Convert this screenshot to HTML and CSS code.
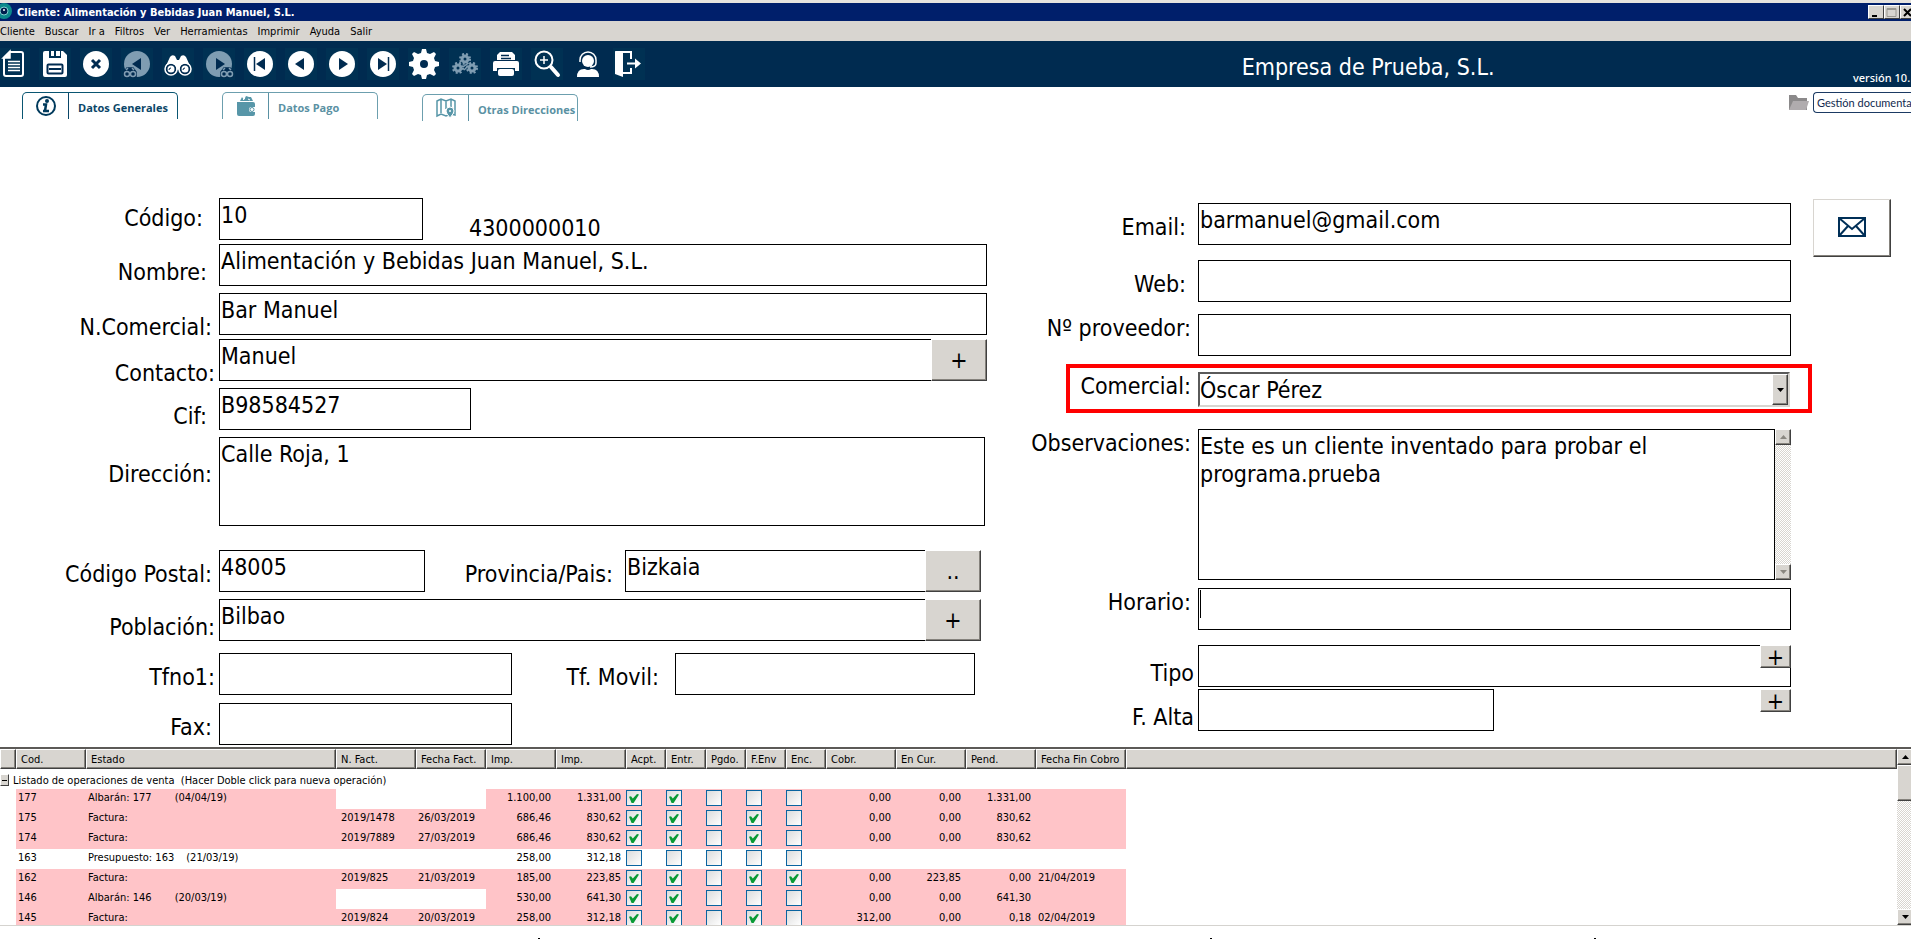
FILE: index.html
```html
<!DOCTYPE html>
<html lang="es">
<head>
<meta charset="utf-8">
<title>Cliente: Alimentación y Bebidas Juan Manuel, S.L.</title>
<link rel="stylesheet" href="styles.css">
</head>
<body>
<div class="window">
  <header class="titlebar">
    <svg class="titlebar-icon" width="13" height="18" viewBox="0 0 13 18"><circle cx="4" cy="8" r="8" fill="#0b8a8c"/><circle cx="4" cy="8" r="4" fill="#00204f" stroke="#7fd0d0"/><circle cx="4" cy="7" r="1" fill="#fff"/></svg>
    <h1 class="titlebar-text">Cliente: Alimentación y Bebidas Juan Manuel, S.L.</h1>
    <div class="win-buttons">
      <button class="win-button" aria-label="Minimizar"><svg width="12" height="11"><path d="M2 9h5" stroke="#000" stroke-width="2"/></svg></button>
      <button class="win-button" aria-label="Maximizar"><svg width="12" height="11"><path d="M1 1.500h9v8h-9zM1 2.500h9" fill="none" stroke="#9a9892"/></svg></button>
      <button class="win-button" aria-label="Cerrar"><svg width="12" height="11"><path d="M2 2l7 7M9 2l-7 7" stroke="#000" stroke-width="2"/></svg></button>
    </div>
  </header>

  <nav class="menubar">
    <button>Cliente</button><button>Buscar</button><button>Ir a</button><button>Filtros</button><button>Ver</button><button>Herramientas</button><button>Imprimir</button><button>Ayuda</button><button>Salir</button>
  </nav>

  <div class="toolbar">
    <div class="tools">
      <button class="tool" aria-label="Nuevo"><svg viewBox="0 0 32 32"><path d="M12 4h11q2 0 2 2v20q0 2-2 2H8q-2 0-2-2V10z" fill="none" stroke="#fff" stroke-width="2"/><path d="M5 10l7-7v7zM10 13.500h12M10 16.500h12M10 19.500h12M10 22.500h12" fill="#fff" stroke="#fff" stroke-width="1.500"/></svg></button>
      <button class="tool" aria-label="Guardar"><svg viewBox="0 0 32 32"><path d="M6 3h4v7h12V3h2l4 4v20q0 2-2 2H6q-2 0-2-2V5q0-2 2-2z" fill="#fff"/><rect x="8.500" y="16.500" width="15" height="9" rx="1" fill="none" stroke="#002b50" stroke-width="2"/><path d="M10 21h12" stroke="#002b50" stroke-width="2"/><path d="M12 3h3v5h-3zM17 3h4v5h-4z" fill="#fff"/></svg></button>
      <button class="tool" aria-label="Cancelar"><svg viewBox="0 0 32 32"><circle cx="16" cy="16" r="13" fill="#fff"/><path d="M12 12l8 8M20 12l-8 8" stroke="#002b50" stroke-width="3"/></svg></button>
      <button class="tool" aria-label="Búsqueda anterior" disabled><svg viewBox="0 0 32 32"><circle cx="16" cy="16" r="13" fill="#7f9db2"/><path d="M20 10v12l-9-6z" fill="#002b50"/><g fill="#002b50" stroke="#7f9db2" stroke-width="1.500"><path d="M3 29v-5l3-4h6l3 4v5z" stroke="#002b50"/><circle cx="6" cy="26" r="2.500"/><circle cx="12" cy="26" r="2.500"/><path d="M5 22l2-2M13 22l-2-2"/></g></svg></button>
      <button class="tool" aria-label="Buscar"><svg viewBox="0 0 32 32"><path d="M3 20l5-11q2-3 5-1l2 4h2l2-4q3-2 5 1l5 11-3 6h-7l-3-5-3 5H6z" fill="#fff"/><g fill="#fff" stroke="#002b50" stroke-width="2"><circle cx="9" cy="21" r="4.500"/><circle cx="23" cy="21" r="4.500"/></g><g fill="none" stroke="#fff" stroke-width="1.500"><circle cx="9" cy="21" r="6"/><circle cx="23" cy="21" r="6"/></g><path d="M7 22a2 2 0 0 1 2-2M21 22a2 2 0 0 1 2-2" fill="none" stroke="#002b50"/></svg></button>
      <button class="tool" aria-label="Búsqueda siguiente" disabled><svg viewBox="0 0 32 32"><circle cx="16" cy="16" r="13" fill="#7f9db2"/><path d="M13 10v12l9-6z" fill="#002b50"/><g fill="#002b50" stroke="#7f9db2" stroke-width="1.500"><path d="M18 29v-5l3-4h6l3 4v5z" stroke="#002b50"/><circle cx="21" cy="26" r="2.500"/><circle cx="27" cy="26" r="2.500"/><path d="M20 22l2-2M28 22l-2-2"/></g></svg></button>
      <button class="tool" aria-label="Primero"><svg viewBox="0 0 32 32"><circle cx="16" cy="16" r="13" fill="#fff"/><path d="M21 10v12l-9-6z" fill="#002b50"/><path d="M10.500 9v14" stroke="#002b50" stroke-width="1.500"/></svg></button>
      <button class="tool" aria-label="Anterior"><svg viewBox="0 0 32 32"><circle cx="16" cy="16" r="13" fill="#fff"/><path d="M19 10v12l-9-6z" fill="#002b50"/></svg></button>
      <button class="tool" aria-label="Siguiente"><svg viewBox="0 0 32 32"><circle cx="16" cy="16" r="13" fill="#fff"/><path d="M13 10v12l9-6z" fill="#002b50"/></svg></button>
      <button class="tool" aria-label="Último"><svg viewBox="0 0 32 32"><circle cx="16" cy="16" r="13" fill="#fff"/><path d="M11 10v12l9-6z" fill="#002b50"/><path d="M21.500 9v14" stroke="#002b50" stroke-width="1.500"/></svg></button>
      <button class="tool" aria-label="Configuración"><svg viewBox="0 0 32 32"><path d="M13 5l1-4h4l1 4 3 1 4-2 2 2-2 4 1 3 4 1v4l-4 1-1 3 2 4-2 2-4-2-3 1-1 4h-4l-1-4-3-1-4 2-2-2 2-4-1-3-4-1v-4l4-1 1-3-2-4 2-2 4 2z" fill="#fff"/><circle cx="16" cy="16" r="4" fill="#002b50"/></svg></button>
      <button class="tool" aria-label="Procesos" disabled><svg viewBox="0 0 32 32"><g fill="none" stroke="#7f9db2"><circle cx="16" cy="11" r="3" stroke-width="3"/><circle cx="16" cy="11" r="5" stroke-width="2" stroke-dasharray="2 2"/><circle cx="9" cy="20" r="3" stroke-width="3"/><circle cx="9" cy="20" r="5" stroke-width="2" stroke-dasharray="2 2"/><circle cx="23" cy="20" r="3" stroke-width="3"/><circle cx="23" cy="20" r="5" stroke-width="2" stroke-dasharray="2 2"/><path d="M14 19l4-3M15 22l3-3" stroke-width="1.500"/></g></svg></button>
      <button class="tool" aria-label="Imprimir"><svg viewBox="0 0 32 32"><path d="M10 4h12l3 3v6H7V7z" fill="#fff"/><path d="M11 7.500h8M11 10.500h10" stroke="#002b50" stroke-width="1.500"/><path d="M5 13h22q2 0 2 2v8h-4v-3H7v3H3v-8q0-2 2-2z" fill="#fff"/><path d="M6 12.500h20" stroke="#002b50"/><rect x="8" y="21" width="16" height="7" rx="2" fill="#fff"/></svg></button>
      <button class="tool" aria-label="Zoom"><svg viewBox="0 0 32 32"><circle cx="13" cy="12" r="8.500" fill="none" stroke="#fff" stroke-width="2"/><path d="M13 8v8M9 12h8" stroke="#fff" stroke-width="1.500"/><path d="M20 19l7 8" stroke="#fff" stroke-width="4" stroke-linecap="round"/></svg></button>
      <button class="tool tool--plain" aria-label="Soporte"><svg viewBox="0 0 32 32"><circle cx="16" cy="13" r="6" fill="#fff"/><path d="M8 14v-2a8 8 0 0 1 16 0v3q0 4-6 4" fill="none" stroke="#fff" stroke-width="1.500"/><path d="M5 29q0-8 7-8h1q3 2 6 0h1q7 0 7 8z" fill="#fff"/></svg></button>
      <button class="tool" aria-label="Salir"><svg viewBox="0 0 32 32"><path d="M2 3l8 2v24l-8-3z" fill="#fff"/><path d="M3 4h15v7M18 20v5h-8" fill="none" stroke="#fff" stroke-width="2"/><path d="M14 14.500h8v-4l6 5-6 5v-4h-8z" fill="#fff"/></svg></button>
    </div>
    <div class="company">Empresa de Prueba, S.L.</div>
    <div class="version">versión 10.</div>
  </div>

  <div class="tabs">
    <button class="tab tab--active"><span class="tab-icon"><svg width="22" height="22" viewBox="0 0 22 22"><circle cx="11" cy="11" r="9" fill="none" stroke="#003a5c" stroke-width="2"/><circle cx="12" cy="6" r="2" fill="#003a5c"/><path d="M8 9.500h3l-1 6.500M8 16h6" fill="none" stroke="#003a5c" stroke-width="2.500"/></svg></span><span class="tab-text">Datos Generales</span></button>
    <button class="tab"><span class="tab-icon"><svg width="22" height="22" viewBox="0 0 22 22"><path d="M2 7h16q2 0 2 2v3h-4q-2 0-2 2.500t2 2.500h4v2q0 2-2 2H4q-2 0-2-2z" fill="#5796a8"/><path d="M5 6l2-4 2 3 2-4 3 1 2 0 2 4z" fill="#5796a8"/><path d="M8 5l2-2M13 4l2 1" stroke="#fff"/><circle cx="17" cy="14.500" r="2" fill="none" stroke="#5796a8"/></svg></span><span class="tab-text">Datos Pago</span></button>
    <button class="tab tab--low"><span class="tab-icon"><svg width="22" height="22" viewBox="0 0 22 22"><path d="M2 4l4-2 5 2 5-2 4 2v14l-4-1-5 2-5-2-4 2zM6 2v14M11 4v8M16 2v8" fill="none" stroke="#5796a8" stroke-width="1.500"/><path d="M15 21q-4-5-4-7a4 4 0 0 1 8 0q0 2-4 7z" fill="#5796a8" stroke="#fff"/><circle cx="15" cy="14" r="1" fill="#fff"/></svg></span><span class="tab-text">Otras Direcciones</span></button>
    <div class="docs">
      <svg width="20" height="16" viewBox="0 0 20 16"><path d="M0 0h7l2 3h9v12H0z" fill="#8b898a"/><path d="M4 6h16l-3 9H0z" fill="#b0acae"/></svg>
      <button class="docs-button">Gestión documenta</button>
    </div>
  </div>

  <main class="form">
    <section class="panel panel--left">
      <div class="row">
        <label class="label label--high" for="codigo">Código:</label>
        <input class="field w-code" id="codigo" value="10">
        <output class="account">4300000010</output>
      </div>
      <div class="row gap-4"><label class="label label--in" for="nombre">Nombre:</label><input class="field" id="nombre" value="Alimentación y Bebidas Juan Manuel, S.L."></div>
      <div class="row gap-7"><label class="label label--low" for="ncom">N.Comercial:</label><input class="field" id="ncom" value="Bar Manuel"></div>
      <div class="row gap-4"><label class="label label--low label--near" for="contacto">Contacto:</label><input class="field field--joined" id="contacto" value="Manuel"><button class="add" aria-label="Añadir contacto">+</button></div>
      <div class="row gap-7"><label class="label label--in" for="cif">Cif:</label><input class="field w-cif" id="cif" value="B98584527"></div>
      <div class="row row--inset gap-7"><label class="label label--mid" for="dir">Dirección:</label><textarea class="field field--address" id="dir">Calle Roja, 1</textarea></div>
      <div class="row row--short gap-24">
        <label class="label label--up" for="cp">Código Postal:</label><input class="field w-cp" id="cp" value="48005">
        <label class="label label--second label--up" for="prov">Provincia/Pais:</label><input class="field field--joined" id="prov" value="Bizkaia"><button class="add" aria-label="Elegir provincia">..</button>
      </div>
      <div class="row row--short gap-7"><label class="label label--near" for="pob">Población:</label><input class="field field--joined" id="pob" value="Bilbao"><button class="add" aria-label="Añadir población">+</button></div>
      <div class="row row--phone gap-12">
        <label class="label label--near label--up" for="tf1">Tfno1:</label><input class="field w-phone" id="tf1">
        <label class="label label--mobile label--up" for="tfm">Tf. Movil:</label><input class="field" id="tfm">
      </div>
      <div class="row gap-8"><label class="label label--up" for="fax">Fax:</label><input class="field w-phone" id="fax"></div>
    </section>

    <section class="panel panel--right">
      <div class="row"><label class="label label--in label--up" for="email">Email:</label><input class="field" id="email" value="barmanuel@gmail.com"></div>
      <div class="row gap-15"><label class="label label--in label--up" for="web">Web:</label><input class="field" id="web"></div>
      <div class="row gap-12"><label class="label label--top" for="prv">Nº proveedor:</label><input class="field" id="prv"></div>
      <div class="row row--marked"><label class="label label--top" for="com">Comercial:</label>
        <div class="combo"><select id="com"><option>Óscar Pérez</option></select><span class="combo-arrow"><svg width="7" height="4"><path d="M0 0h7L3.500 4z"/></svg></span></div>
      </div>
      <div class="row gap-16"><label class="label label--top" for="obs">Observaciones:</label>
        <textarea class="field field--notes" id="obs">Este es un cliente inventado para probar el programa.prueba</textarea>
        <div class="scroll"><button class="scroll-button" aria-label="Subir"><svg width="7" height="4"><path d="M0 4h7L3.500 0z" fill="#8a8780"/></svg></button><button class="scroll-button" aria-label="Bajar"><svg width="7" height="4"><path d="M0 0h7L3.500 4z" fill="#8a8780"/></svg></button></div>
      </div>
      <div class="row gap-8"><label class="label label--top" for="hor">Horario:</label><input class="field field--caret" id="hor"></div>
      <div class="row gap-15"><label class="label label--near" for="tipo">Tipo</label><div class="field-wrap"><input class="field" id="tipo"><button class="add add--small add--over" aria-label="Añadir tipo">+</button></div></div>
      <div class="row gap-2"><label class="label label--near" for="alta">F. Alta</label><input class="field w-date" id="alta"><button class="add add--small add--end" aria-label="Añadir fecha">+</button></div>
    </section>

    <button class="mail" aria-label="Enviar email"><svg width="28" height="20" viewBox="0 0 28 20"><path d="M1 1h26v18H1zM1 1l13 11L27 1M1 19l9-10M27 19l-9-10" fill="none" stroke="#002f57" stroke-width="2"/></svg></button>
  </main>

  <section class="operations">
    <div class="table-wrap">
      <table class="grid">
        <colgroup><col class="c-tree"><col class="c-70"><col class="c-state"><col class="c-80"><col class="c-70"><col class="c-70"><col class="c-70"><col class="c-40"><col class="c-40"><col class="c-40"><col class="c-40"><col class="c-40"><col class="c-70"><col class="c-70"><col class="c-70"><col class="c-90"><col></colgroup>
        <thead><tr><th></th><th>Cod.</th><th>Estado</th><th>N. Fact.</th><th>Fecha Fact.</th><th>Imp.</th><th>Imp.</th><th>Acpt.</th><th>Entr.</th><th>Pgdo.</th><th>F.Env</th><th>Enc.</th><th>Cobr.</th><th>En Cur.</th><th>Pend.</th><th>Fecha Fin Cobro</th><th></th></tr></thead>
        <tbody>
        <tr class="group"><td colspan="17"><div class="group-line"><button class="collapse" aria-label="Contraer"><svg width="7" height="11"><path d="M1 5.500h5" stroke="#000"/></svg></button>Listado de operaciones de venta&nbsp; (Hacer Doble click para nueva operación)</div></td></tr>
        <tr class="due"><td></td><td>177</td><td>Albarán: 177<span class="when">(04/04/19)</span></td><td class="blank"></td><td class="blank"></td><td class="num">1.100,00</td><td class="num">1.331,00</td><td class="chk"><input type="checkbox" aria-label="Acpt." checked></td><td class="chk"><input type="checkbox" aria-label="Entr." checked></td><td class="chk"><input type="checkbox" aria-label="Pgdo."></td><td class="chk"><input type="checkbox" aria-label="F.Env"></td><td class="chk"><input type="checkbox" aria-label="Enc."></td><td class="num">0,00</td><td class="num">0,00</td><td class="num">1.331,00</td><td></td><td></td></tr>
        <tr class="due"><td></td><td>175</td><td>Factura:</td><td class="inv">2019/1478</td><td>26/03/2019</td><td class="num">686,46</td><td class="num">830,62</td><td class="chk"><input type="checkbox" aria-label="Acpt." checked></td><td class="chk"><input type="checkbox" aria-label="Entr." checked></td><td class="chk"><input type="checkbox" aria-label="Pgdo."></td><td class="chk"><input type="checkbox" aria-label="F.Env" checked></td><td class="chk"><input type="checkbox" aria-label="Enc."></td><td class="num">0,00</td><td class="num">0,00</td><td class="num">830,62</td><td></td><td></td></tr>
        <tr class="due"><td></td><td>174</td><td>Factura:</td><td class="inv">2019/7889</td><td>27/03/2019</td><td class="num">686,46</td><td class="num">830,62</td><td class="chk"><input type="checkbox" aria-label="Acpt." checked></td><td class="chk"><input type="checkbox" aria-label="Entr." checked></td><td class="chk"><input type="checkbox" aria-label="Pgdo."></td><td class="chk"><input type="checkbox" aria-label="F.Env" checked></td><td class="chk"><input type="checkbox" aria-label="Enc."></td><td class="num">0,00</td><td class="num">0,00</td><td class="num">830,62</td><td></td><td></td></tr>
        <tr><td></td><td>163</td><td>Presupuesto: 163<span class="when when--near">(21/03/19)</span></td><td></td><td></td><td class="num">258,00</td><td class="num">312,18</td><td class="chk"><input type="checkbox" aria-label="Acpt."></td><td class="chk"><input type="checkbox" aria-label="Entr."></td><td class="chk"><input type="checkbox" aria-label="Pgdo."></td><td class="chk"><input type="checkbox" aria-label="F.Env"></td><td class="chk"><input type="checkbox" aria-label="Enc."></td><td></td><td></td><td></td><td></td><td></td></tr>
        <tr class="due"><td></td><td>162</td><td>Factura:</td><td class="inv">2019/825</td><td>21/03/2019</td><td class="num">185,00</td><td class="num">223,85</td><td class="chk"><input type="checkbox" aria-label="Acpt." checked></td><td class="chk"><input type="checkbox" aria-label="Entr." checked></td><td class="chk"><input type="checkbox" aria-label="Pgdo."></td><td class="chk"><input type="checkbox" aria-label="F.Env" checked></td><td class="chk"><input type="checkbox" aria-label="Enc." checked></td><td class="num">0,00</td><td class="num">223,85</td><td class="num">0,00</td><td>21/04/2019</td><td></td></tr>
        <tr class="due"><td></td><td>146</td><td>Albarán: 146<span class="when">(20/03/19)</span></td><td class="blank"></td><td class="blank"></td><td class="num">530,00</td><td class="num">641,30</td><td class="chk"><input type="checkbox" aria-label="Acpt." checked></td><td class="chk"><input type="checkbox" aria-label="Entr." checked></td><td class="chk"><input type="checkbox" aria-label="Pgdo."></td><td class="chk"><input type="checkbox" aria-label="F.Env"></td><td class="chk"><input type="checkbox" aria-label="Enc."></td><td class="num">0,00</td><td class="num">0,00</td><td class="num">641,30</td><td></td><td></td></tr>
        <tr class="due"><td></td><td>145</td><td>Factura:</td><td class="inv">2019/824</td><td>20/03/2019</td><td class="num">258,00</td><td class="num">312,18</td><td class="chk"><input type="checkbox" aria-label="Acpt." checked></td><td class="chk"><input type="checkbox" aria-label="Entr." checked></td><td class="chk"><input type="checkbox" aria-label="Pgdo."></td><td class="chk"><input type="checkbox" aria-label="F.Env" checked></td><td class="chk"><input type="checkbox" aria-label="Enc."></td><td class="num">312,00</td><td class="num">0,00</td><td class="num">0,18</td><td>02/04/2019</td><td></td></tr>
        </tbody>
      </table>
    </div>
    <div class="scroll scroll--grid"><button class="scroll-button" aria-label="Subir"><svg width="7" height="4"><path d="M0 4h7L3.500 0z"/></svg></button><div class="thumb"></div><button class="scroll-button scroll-button--end" aria-label="Bajar"><svg width="7" height="4"><path d="M0 0h7L3.500 4z"/></svg></button></div>
  </section>
  <footer class="footer"><i></i><i></i><i></i></footer>
</div>
</body>
</html>
```

FILE: styles.css
```css
:root {
  --face: #d8d5d0;
  --shade: #85827c;
  --dark: #404040;
  --navy: #002b50;
  --ui: "DejaVu Sans Condensed", "DejaVu Sans", sans-serif;
}
* { box-sizing: border-box; }
html, body { height: 100%; }
body { margin: 0; overflow: hidden; background: #fff; color: #000; font: 11px/13px var(--ui); }
button, input, select, textarea { font: inherit; color: inherit; border-radius: 0; margin: 0; }
button { padding: 0; border: 0; background: none; }
svg { display: block; flex: none; }

.window { display: flex; flex-direction: column; height: 100vh; border-top: 3px solid #e6e3de; }

.titlebar { display: flex; align-items: center; height: 18px; background: #001f6b; color: #fff; }
.titlebar-icon { margin-right: 4px; }
.titlebar-text { flex: 1; margin: 0; font-size: 11px; font-weight: bold; white-space: nowrap; }
.win-buttons { display: flex; width: 43px; overflow: hidden; }
.win-button { flex: none; width: 16px; height: 14px; padding: 1px; background: var(--face); border: 1px solid; border-color: #fff var(--dark) var(--dark) #fff; }

.menubar { display: flex; gap: 10px; height: 20px; background: var(--face); }

.toolbar { display: flex; height: 46px; background: var(--navy); color: #fff; overflow: hidden; }
.tools { flex: 65 1 0; display: flex; align-items: center; gap: 9px; min-width: 0; }
.tool { flex: none; width: 32px; height: 32px; background: #003153; }
.tools .tool:first-child { margin-left: -2px; }
.tool--plain { background: none; }
.company { flex: 32 1 0; align-self: center; padding-top: 6px; font-size: 23px; line-height: 28px; white-space: nowrap; }
.version { flex: none; width: 58px; align-self: flex-end; padding-bottom: 3px; white-space: nowrap; font-family: "Noto Sans", sans-serif; font-weight: 500; }

.tabs { display: flex; align-items: flex-start; gap: 44px; padding: 5px 0 0 22px; height: 111px; overflow: hidden; }
.tab { display: flex; width: 156px; height: 27px; border: 1px solid #6c9fae; border-bottom: 0; border-radius: 5px 5px 0 0; color: #5a91a3; font: bold 11px/26px "Open Sans", sans-serif; white-space: nowrap; }
.tab--active { border-color: #0a5672; color: #0a4668; }
.tab--low { margin-top: 2px; }
.tab-icon { display: flex; justify-content: center; align-items: center; width: 46px; height: 26px; border-right: 1px solid; flex: none; }
.tab-text { padding-left: 9px; padding-top: 2px; }
.docs { display: flex; align-items: center; gap: 4px; width: 122px; margin-left: auto; }
.docs-button { flex: 1; height: 21px; padding: 0 0 0 3px; border: 1px solid #1b3a63; border-right: 0; border-radius: 4px 0 0 4px; color: #10294e; font: 11px/18px Lato, sans-serif; text-align: left; white-space: nowrap; }

.form { flex: 1 0 auto; display: grid; grid-template-columns: minmax(0, 987fr) minmax(0, 804fr) 120px; align-items: start; font-size: 23px; line-height: 28px; }
.panel { display: flex; flex-direction: column; min-width: 0; }
.panel--left { --label: 219px; }
.panel--right { --label: 211px; padding-top: 5px; }
.row { display: flex; min-width: 0; }
.row--inset { padding-right: 2px; }
.row--short { padding-right: 6px; }
.row--phone { padding-right: 12px; }
.gap-2 { margin-top: 2px; }
.gap-4 { margin-top: 4px; }
.gap-7 { margin-top: 7px; }
.gap-8 { margin-top: 8px; }
.gap-12 { margin-top: 12px; }
.gap-15 { margin-top: 15px; }
.gap-16 { margin-top: 16px; }
.gap-24 { margin-top: 24px; }

.label { flex: none; width: var(--label); align-self: flex-end; padding-right: 7px; text-align: right; white-space: nowrap; }
.label--near { padding-right: 4px; }
.label--in { padding-right: 12px; }
.label--up { padding-bottom: 4px; }
.label--high { padding: 0 16px 8px 0; }
.label--low { line-height: 16px; }
.label--mid { align-self: center; padding-bottom: 16px; }
.label--top { align-self: flex-start; }
.label--second { width: 200px; padding-right: 12px; }
.label--mobile { width: 163px; padding-right: 16px; }
.account { align-self: flex-end; padding-left: 46px; line-height: 24px; }

.field { flex: 1 1 0; min-width: 0; width: 100%; height: 42px; padding: 0 0 8px 1px; border: 1px solid #000; background: #fff; outline: 0; resize: none; }
.field--joined { border-right: 0; }
.field--address { height: 89px; padding-top: 2px; }
.field--notes { height: 151px; padding-top: 2px; overflow: hidden; }
.field--caret { background: linear-gradient(#000, #000) 1px 1px / 1px 28px no-repeat #fff; }
.field-wrap { position: relative; flex: 1; display: flex; min-width: 0; }
.w-code { flex: 0 0 204px; }
.w-cif { flex: 0 0 252px; }
.w-cp { flex: 0 0 206px; }
.w-phone { flex: 0 0 293px; }
.w-date { flex: 0 0 296px; }

.add { flex: none; width: 56px; height: 42px; background: var(--face); border: 1px solid; border-color: #fff var(--dark) var(--dark) #fff; box-shadow: inset -1px -1px var(--shade); }
.add--small { width: 31px; height: 23px; line-height: 20px; }
.add--over { position: absolute; top: 0; right: 0; }
.add--end { margin-left: auto; }

.row--marked { margin: 8px -21px 0 79px; padding: 4px 18px 2px 0; border: 4px solid #f00; }
.row--marked .label { width: 128px; }
.combo { flex: 1; display: flex; height: 35px; border: 2px solid; border-color: #5a5a5a var(--face) var(--face) #5a5a5a; }
.combo select { flex: 1; min-width: 0; appearance: none; border: 0; padding: 0; background: #fff; outline: 0; }
.combo-arrow { display: grid; place-items: center; width: 16px; background: var(--face); border: 1px solid; border-color: #fff var(--dark) var(--dark) #fff; box-shadow: inset -1px -1px var(--shade); }

.scroll { flex: none; display: flex; flex-direction: column; justify-content: space-between; width: 16px; background: repeating-conic-gradient(#d8d5d0 0 25%, #fff 0 50%) 0 0 / 2px 2px; }
.scroll-button { display: grid; place-items: center; flex: none; width: 16px; height: 16px; background: var(--face); border: 1px solid; border-color: #fff var(--dark) var(--dark) #fff; box-shadow: inset -1px -1px var(--shade); }
.scroll--grid { justify-content: flex-start; width: 14px; overflow: hidden; }
.scroll-button--end { margin-top: auto; }
.thumb { flex: none; width: 16px; height: 36px; background: var(--face); border: 1px solid; border-color: #fff var(--dark) var(--dark) #fff; box-shadow: inset -1px -1px var(--shade); }

.mail { justify-self: start; margin: 1px 0 0 22px; width: 78px; height: 58px; display: grid; place-items: center; border: 1px solid; border-color: var(--face) var(--dark) var(--dark) var(--face); box-shadow: inset -1px -1px var(--shade); }
.mail svg { margin-bottom: 3px; }

.operations { flex: none; display: flex; height: 179px; border-top: 2px solid #5c5a57; border-bottom: 1px solid #d5d3cf; overflow: hidden; }
.table-wrap { flex: 1; min-width: 0; overflow: hidden; }
.grid { width: 100%; table-layout: fixed; border-collapse: separate; border-spacing: 0; }
.grid th { height: 20px; padding: 0 0 0 4px; text-align: left; font-weight: normal; white-space: nowrap; background: var(--face); border: 1px solid; border-color: #fff var(--dark) var(--dark) #fff; box-shadow: inset -1px -1px var(--shade); }
.grid td { height: 20px; padding: 0 0 4px 2px; white-space: nowrap; }
.c-tree { width: 16px; }
.c-40 { width: 40px; }
.c-70 { width: 70px; }
.c-80 { width: 80px; }
.c-90 { width: 90px; }
.c-state { width: 250px; }
.grid .group td { padding: 2px 0 0; }
.group-line { display: flex; align-items: center; gap: 4px; }
.collapse { width: 9px; height: 12px; background: var(--face); border: 1px solid; border-color: #fff var(--dark) var(--dark) #fff; }
.due td { background: #ffc4c8; }
.due td:first-child, .due td:last-child, .due .blank { background: #fff; }
.grid .inv { padding-left: 5px; }
.grid .num { padding-right: 5px; text-align: right; }
.grid .chk { padding: 0; vertical-align: top; }
.chk input { display: block; appearance: none; width: 16px; height: 16px; margin-top: 1px; border: 1px solid #0a64a0; background: linear-gradient(135deg, #dcdcdc, #fff); }
.chk input:checked::before { content: ""; display: block; width: 10px; height: 9px; margin: 3px 2px; background: #0a9a35; clip-path: polygon(0 30%, 20% 25%, 38% 50%, 80% 0, 100% 5%, 46% 100%, 26% 100%); }
.when { margin-left: 23px; }
.when--near { margin-left: 12px; }

.footer { flex: none; display: grid; grid-template-columns: 540fr 672fr 384fr; align-items: end; height: 13px; margin-right: 315px; }
.footer i { justify-self: end; width: 2px; height: 1px; background: #000; }
```
